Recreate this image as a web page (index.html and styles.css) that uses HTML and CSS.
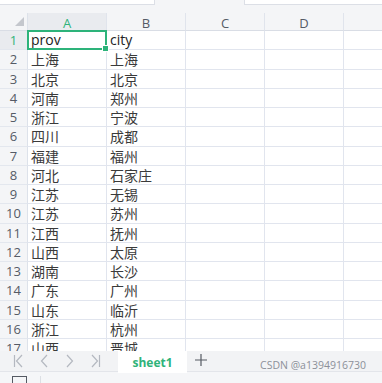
FILE: index.html
```html
<!DOCTYPE html>
<html>
  <head>
    <meta charset="utf-8">
    <title>sheet1</title>
    <link rel="stylesheet" href="styles.css">
  </head>
  <body>

    <div class="topbar">
      <div class="namebox"></div>
      <div class="spacer"></div>
      <div class="formula"></div>
    </div>

    <div class="sheet">
      <div class="row head">
        <div class="rh corner"><span class="tri"></span></div>
        <div class="ch sel">A</div>
        <div class="ch">B</div>
        <div class="ch">C</div>
        <div class="ch">D</div>
        <div class="ch rest"></div>
      </div>

      <div class="row"><div class="rh sel">1</div><div class="c active">prov<span class="handle"></span></div><div class="c lat">city</div><div class="c"></div><div class="c"></div><div class="c rest"></div></div>
      <div class="row"><div class="rh">2</div><div class="c">上海</div><div class="c">上海</div><div class="c"></div><div class="c"></div><div class="c rest"></div></div>
      <div class="row"><div class="rh">3</div><div class="c">北京</div><div class="c">北京</div><div class="c"></div><div class="c"></div><div class="c rest"></div></div>
      <div class="row"><div class="rh">4</div><div class="c">河南</div><div class="c">郑州</div><div class="c"></div><div class="c"></div><div class="c rest"></div></div>
      <div class="row"><div class="rh">5</div><div class="c">浙江</div><div class="c">宁波</div><div class="c"></div><div class="c"></div><div class="c rest"></div></div>
      <div class="row"><div class="rh">6</div><div class="c">四川</div><div class="c">成都</div><div class="c"></div><div class="c"></div><div class="c rest"></div></div>
      <div class="row"><div class="rh">7</div><div class="c">福建</div><div class="c">福州</div><div class="c"></div><div class="c"></div><div class="c rest"></div></div>
      <div class="row"><div class="rh">8</div><div class="c">河北</div><div class="c">石家庄</div><div class="c"></div><div class="c"></div><div class="c rest"></div></div>
      <div class="row"><div class="rh">9</div><div class="c">江苏</div><div class="c">无锡</div><div class="c"></div><div class="c"></div><div class="c rest"></div></div>
      <div class="row"><div class="rh">10</div><div class="c">江苏</div><div class="c">苏州</div><div class="c"></div><div class="c"></div><div class="c rest"></div></div>
      <div class="row"><div class="rh">11</div><div class="c">江西</div><div class="c">抚州</div><div class="c"></div><div class="c"></div><div class="c rest"></div></div>
      <div class="row"><div class="rh">12</div><div class="c">山西</div><div class="c">太原</div><div class="c"></div><div class="c"></div><div class="c rest"></div></div>
      <div class="row"><div class="rh">13</div><div class="c">湖南</div><div class="c">长沙</div><div class="c"></div><div class="c"></div><div class="c rest"></div></div>
      <div class="row"><div class="rh">14</div><div class="c">广东</div><div class="c">广州</div><div class="c"></div><div class="c"></div><div class="c rest"></div></div>
      <div class="row"><div class="rh">15</div><div class="c">山东</div><div class="c">临沂</div><div class="c"></div><div class="c"></div><div class="c rest"></div></div>
      <div class="row"><div class="rh">16</div><div class="c">浙江</div><div class="c">杭州</div><div class="c"></div><div class="c"></div><div class="c rest"></div></div>
      <div class="row"><div class="rh">17</div><div class="c">山西</div><div class="c">晋城</div><div class="c"></div><div class="c"></div><div class="c rest"></div></div>
    </div>

    <div class="tabbar">
      <div class="nav">
        <svg width="10" height="14" viewBox="0 0 10 14"><path d="M1.5 1v12M9 1L3.5 7L9 13" fill="none" stroke="#b4b8c0" stroke-width="1.2"/></svg>
        <svg width="10" height="14" viewBox="0 0 10 14"><path d="M8 1L2.5 7L8 13" fill="none" stroke="#b4b8c0" stroke-width="1.2"/></svg>
        <svg width="10" height="14" viewBox="0 0 10 14"><path d="M2 1L7.5 7L2 13" fill="none" stroke="#b4b8c0" stroke-width="1.2"/></svg>
        <svg width="10" height="14" viewBox="0 0 10 14"><path d="M1 1L6.5 7L1 13M8.5 1v12" fill="none" stroke="#b4b8c0" stroke-width="1.2"/></svg>
      </div>
      <div class="tab">sheet1</div>
      <div class="add">
        <svg width="12" height="12" viewBox="0 0 12 12"><path d="M6 0v12M0 6h12" fill="none" stroke="#555a63" stroke-width="1.2"/></svg>
      </div>
      <div class="mark">CSDN @a1394916730</div>
    </div>

    <div class="statusbar">
      <span class="boxicon"></span>
      <span class="sep"></span>
    </div>

  </body>
</html>
```

FILE: styles.css
```css
body                { margin: 0; width: 382px; height: 383px; overflow: hidden; background-color: #f4f5f7;
                      font-family: "Noto Sans CJK SC", "Noto Sans", sans-serif; }

/* formula bar, mostly scrolled out of view */
.topbar             { display: flex; height: 13px; background-color: #f4f5f7; }
.namebox,
.formula            { height: 4px; background-color: #fff; border: 1px solid #dcdfe6; border-top: 0; }
.namebox            { width: 154px; border-left: 0; }
.spacer             { width: 89px; }
.formula            { flex: 1; border-right: 0; }

/* grid */
.sheet              { height: 338px; overflow: hidden; background-color: #fff; }
.row                { display: flex; height: 19.25px; }
.row.head           { height: 18px; background-color: #f4f5f7; }

.rh                 { box-sizing: border-box; width: 28px; flex: none; background-color: #f4f5f7;
                      border-right: 1px solid #dde2ea; border-bottom: 1px solid #e3e7ee;
                      font-family: "Open Sans", "Noto Sans", sans-serif; font-size: 13px; color: #555b66;
                      text-align: center; line-height: 19px; }
.rh.sel             { color: #2fb37a; background-color: #e9ebef; }
.corner             { position: relative; border-bottom-color: #d9dde5; }
.tri                { position: absolute; right: 3px; bottom: 4px; width: 0; height: 0;
                      border-left: 9px solid transparent; border-bottom: 9px solid #c4c7cd; }

.ch                 { box-sizing: border-box; width: 79px; flex: none; border-right: 1px solid #e0e4ec;
                      border-bottom: 1px solid #d9dde5;
                      font-family: "Open Sans", "Noto Sans", sans-serif; font-size: 13px; color: #555b66;
                      text-align: center; line-height: 20px; }
.ch.sel             { color: #2fb37a; background-color: #e9ebef; }

.c                  { box-sizing: border-box; width: 79px; flex: none; border-right: 1px solid #e1e5ee;
                      border-bottom: 1px solid #e1e5ee; padding-left: 3px; font-size: 14px; color: #3a3a3a;
                      line-height: 18px; white-space: nowrap; overflow: hidden; }
.c.lat,
.c.active           { font-family: "Open Sans", "Noto Sans", sans-serif; color: #222; }
.rest               { flex: 1; border-right: 0; }

.c.active           { position: relative; overflow: visible; z-index: 2; }
.c.active::before   { content: ""; position: absolute; left: -1px; top: -1px; right: -1px; bottom: -1px;
                      border: 2px solid #2db37a; }
.handle             { position: absolute; right: -3px; bottom: -3px; width: 5px; height: 5px;
                      background-color: #2db37a; border: 1px solid #fff; z-index: 1; }

/* sheet tabs */
.tabbar             { display: flex; align-items: stretch; height: 20px; background-color: #f2f3f5;
                      border-bottom: 1px solid #e3e5ea; }
.nav                { display: flex; align-items: center; gap: 16px; width: 102px; padding-left: 13px; }
.tab                { width: 69px; margin-left: 3px; margin-bottom: -2px; background-color: #fff;
                      color: #2fb37a; font-family: "Open Sans", "Noto Sans", sans-serif; font-weight: bold;
                      font-size: 12px; text-align: center; line-height: 23px; }
.add                { display: flex; align-items: center; padding-left: 8px; padding-bottom: 2px; }
.mark               { margin-left: auto; padding-right: 16px; padding-top: 8px; font-family: "Open Sans", "Noto Sans", sans-serif;
                      font-size: 10.5px; color: #8c9099; line-height: 12px; }

.statusbar          { display: flex; align-items: flex-end; height: 12px; background-color: #f5f6f8; }
.boxicon            { width: 13px; height: 7px; margin-left: 12px; border: 1.5px solid #555a63; border-bottom: 0; }
.sep                { width: 1px; height: 8px; margin-left: 13px; background-color: #dcdfe4; }
```
